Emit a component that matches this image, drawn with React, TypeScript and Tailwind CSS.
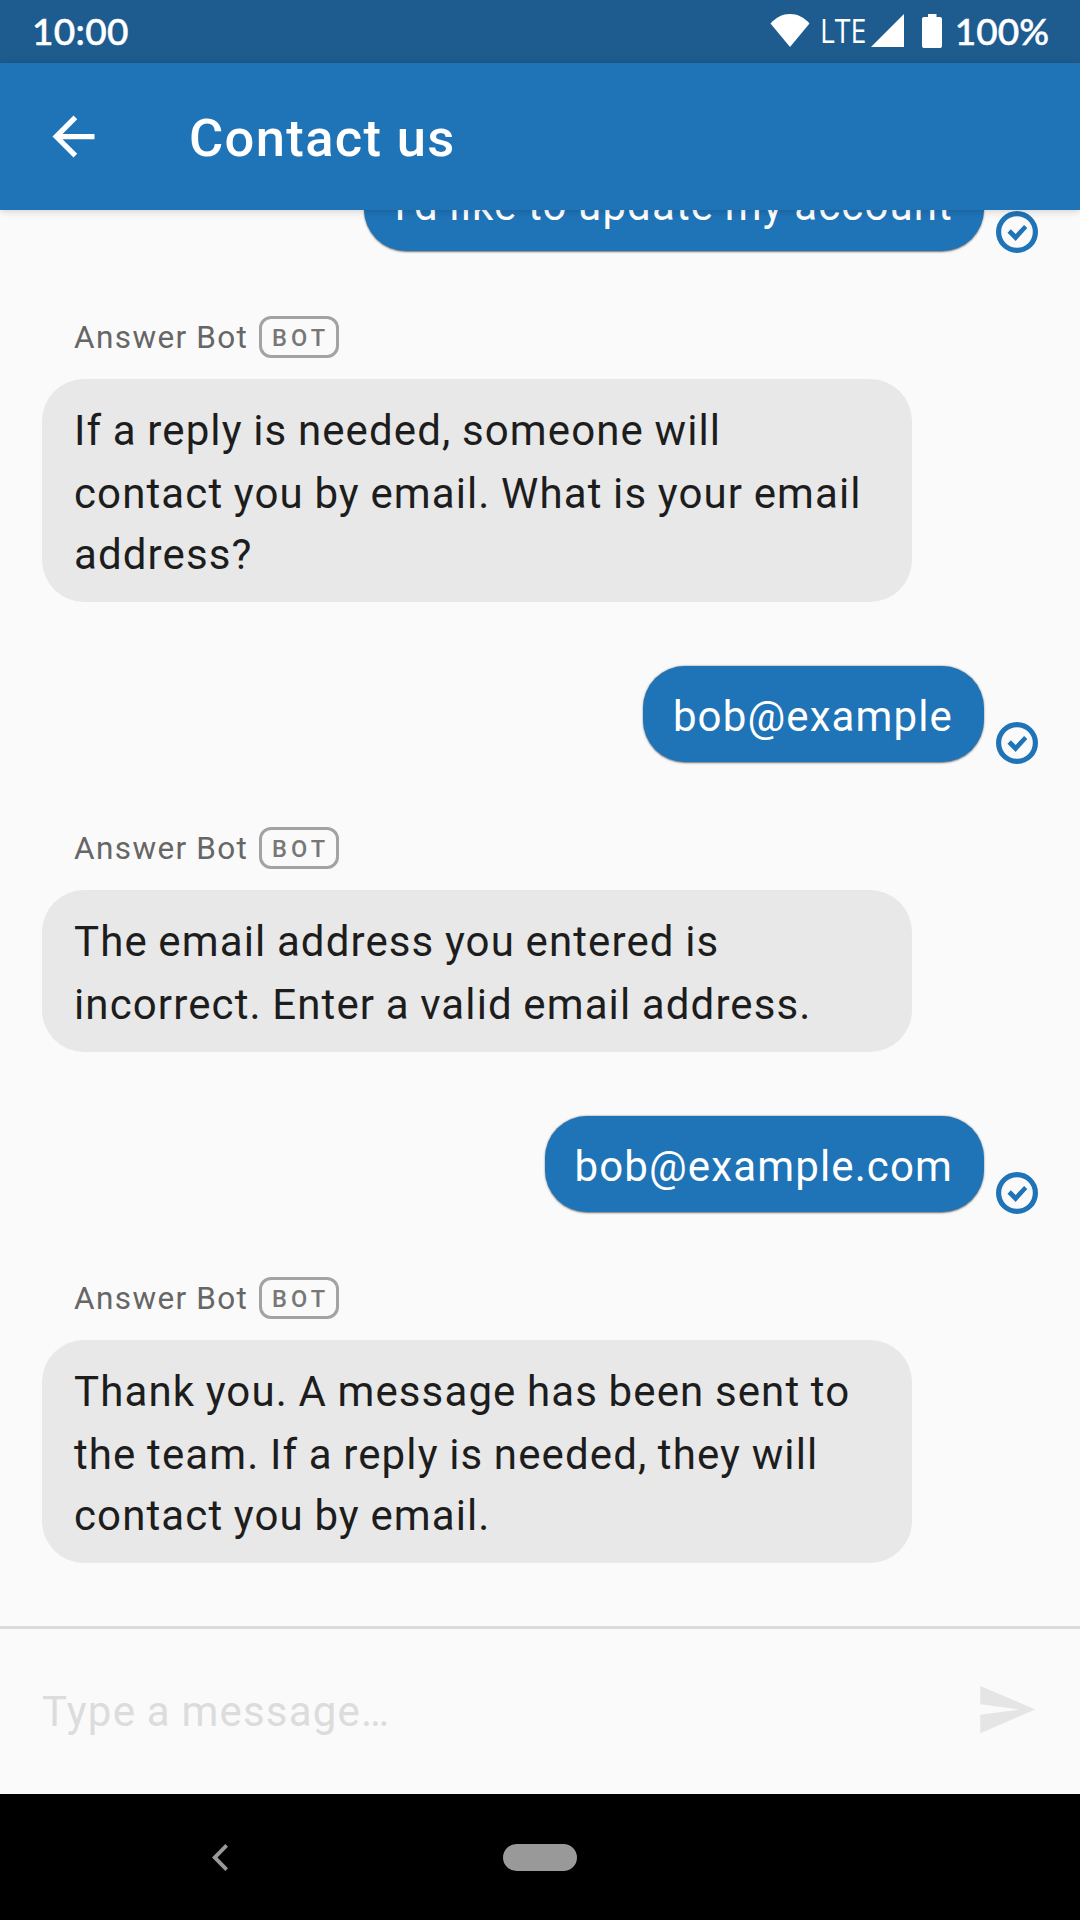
import React from "react";

type Message =
  | { from: "bot"; lines: string[] }
  | { from: "user"; text: string };

const messages: Message[] = [
  { from: "user", text: "I'd like to update my account" },
  {
    from: "bot",
    lines: [
      "If a reply is needed, someone will",
      "contact you by email. What is your email",
      "address?",
    ],
  },
  { from: "user", text: "bob@example" },
  {
    from: "bot",
    lines: [
      "The email address you entered is",
      "incorrect. Enter a valid email address.",
    ],
  },
  { from: "user", text: "bob@example.com" },
  {
    from: "bot",
    lines: [
      "Thank you. A message has been sent to",
      "the team. If a reply is needed, they will",
      "contact you by email.",
    ],
  },
];

function StatusBar() {
  return (
    <div className="flex h-[63px] shrink-0 items-start justify-between bg-[#1e5c8f] pr-[31px] pl-8 text-white">
      <span className="pt-1 font-[Lato,sans-serif] text-[37px] leading-[54px] font-medium tracking-[0.3px] [-webkit-text-stroke:0.5px_white]">
        10:00
      </span>
      <div className="flex items-start">
        <svg className="mt-3.5 h-[33px] w-10" viewBox="0 0 40 33" fill="currentColor">
          <path d="M0.5 9.5C6 3.300 12.500 0 20 0s14 3.300 19.500 9.500L20 33z" />
        </svg>
        <span className="mt-2 ml-[10px] w-[46px] origin-left scale-x-[0.89] font-['Open_Sans',sans-serif] text-[32px] leading-[45px]">
          LTE
        </span>
        <svg className="mt-3.5 ml-[5px] h-[33px] w-[33px]" viewBox="0 0 33 33" fill="currentColor">
          <path d="M0 33L33 0v33z" />
        </svg>
        <svg className="mt-3.5 ml-[18px] h-[34px] w-5" viewBox="0 0 20 34" fill="currentColor">
          <path d="M6 0h8.500v3H18a2 2 0 0 1 2 2v27a2 2 0 0 1-2 2H2a2 2 0 0 1-2-2V5a2 2 0 0 1 2-2h4z" />
        </svg>
        <span className="ml-[13px] pt-1 font-[Lato,sans-serif] text-[37px] leading-[54px] font-medium [-webkit-text-stroke:0.5px_white]">
          100%
        </span>
      </div>
    </div>
  );
}

function AppBar() {
  return (
    <header className="relative z-10 flex h-[147px] shrink-0 items-center bg-[#1f73b7] pl-[42px] text-white shadow-[0_1px_8px_rgba(0,0,0,0.18)]">
      <svg className="size-[63px]" viewBox="0 0 24 24" fill="currentColor">
        <path d="M20 11H7.830l5.590-5.590L12 4l-8 8 8 8 1.410-1.410L7.830 13H20v-2z" />
      </svg>
      <h1 className="ml-[84px] pt-0.5 text-[52.5px] leading-[62px] font-medium tracking-[1.35px]">
        Contact us
      </h1>
    </header>
  );
}

function SentIcon() {
  return (
    <svg className="-mb-0.5 ml-3 size-[42px] text-[#1f73b7]" viewBox="0 0 42 42" fill="none">
      <circle cx="21" cy="21" r="18.400" stroke="currentColor" strokeWidth="5.200" />
      <path fill="currentColor" d="M14.800 18.200l4.900 4.700 8.400-8.900 3.200 3.100-11.600 12.800-8.200-8.200z" />
    </svg>
  );
}

function UserMessage({ text }: { text: string }) {
  return (
    <div className="flex items-end justify-end pr-[42px]">
      <div className="h-24 rounded-[42px] bg-[#1f73b7] pt-[19px] pr-[31px] pl-[30px] text-[42px] leading-[63px] tracking-[1.13px] whitespace-nowrap text-white shadow-[0_0.5px_2px_rgba(0,0,0,0.55)] [word-spacing:-1px]">
        {text}
      </div>
      <SentIcon />
    </div>
  );
}

function BotMessage({ lines }: { lines: string[] }) {
  return (
    <div className="mt-[65px] mb-16 pl-[42px] last:mb-0">
      <div className="flex pl-8">
        <span className="w-[185px] text-[31.5px] leading-[44px] tracking-[1.4px] text-[#666] [word-spacing:-0.7px]">
          Answer Bot
        </span>
        <span className="h-[42px] w-20 rounded-[12px] border-3 border-[#a3a3a3] pl-[10px] text-[23.6px] leading-[38px] font-medium tracking-[4.1px] text-[#777]">
          BOT
        </span>
      </div>
      <div className="mt-[19px] w-[870px] rounded-[42px] bg-[#e8e8e8] pt-5 pb-4 pl-8 text-[42px] leading-[63px] tracking-[1.12px] whitespace-nowrap text-[#1d1d1d] [word-spacing:-1px]">
        {lines.map((line, i) => (
          <div key={line} className={i === 2 ? "-mt-0.5" : ""}>
            {line}
          </div>
        ))}
      </div>
    </div>
  );
}

function Composer() {
  return (
    <div className="flex h-[168px] shrink-0 items-center justify-between border-t-3 border-[#dadada] pr-[42px] pl-[42px]">
      <span className="-mt-px text-[42px] leading-[63px] tracking-[1.2px] text-[#dcdcdc] [word-spacing:-1px]">
        Type a message…
      </span>
      <svg className="-mt-1 size-[63px] text-[#e5e5e5]" viewBox="0 0 24 24" fill="currentColor">
        <path d="M2.010 21L23 12 2.010 3 2 10l15 2-15 2z" />
      </svg>
    </div>
  );
}

function NavigationBar() {
  return (
    <nav className="flex h-[126px] shrink-0 items-center bg-black pl-[212px] text-[#999]">
      <svg className="h-[27px] w-4" viewBox="0 0 16 27" fill="currentColor">
        <path d="M13.300 0L16 2.700 5.500 13.500 16 24.300 13.300 27 0 13.500z" />
      </svg>
      <span className="ml-[275px] h-[27px] w-[74px] rounded-full bg-[#999]" />
    </nav>
  );
}

export default function App() {
  return (
    <div className="flex h-[1920px] w-[1080px] flex-col overflow-hidden bg-[#fafafa] font-[Roboto,sans-serif]">
      <StatusBar />
      <AppBar />
      <main className="flex min-h-0 flex-1 flex-col justify-end overflow-hidden pb-[63px]">
        {messages.map((m, i) =>
          m.from === "bot" ? (
            <BotMessage key={i} lines={m.lines} />
          ) : (
            <UserMessage key={i} text={m.text} />
          ),
        )}
      </main>
      <Composer />
      <NavigationBar />
    </div>
  );
}
